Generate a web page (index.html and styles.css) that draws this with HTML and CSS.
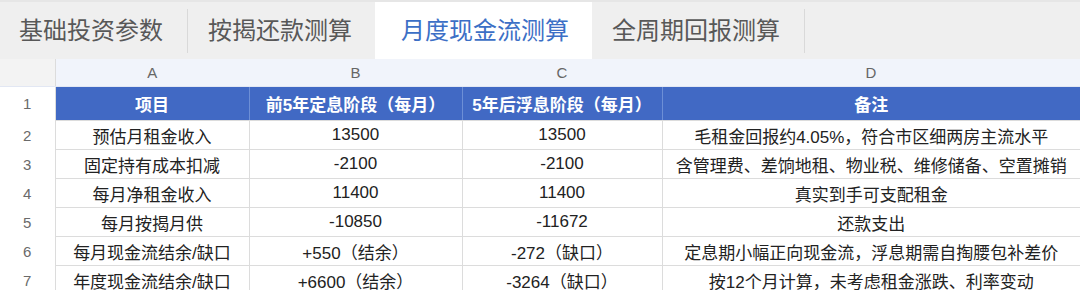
FILE: index.html
```html
<!DOCTYPE html>
<html lang="zh">
<head>
<meta charset="utf-8">
<link rel="stylesheet" href="styles.css">
</head>
<body>
<div class="tabbar">
  <div class="tab t1">基础投资参数</div>
  <div class="sep"></div>
  <div class="tab t2">按揭还款测算</div>
  <div class="tab active">月度现金流测算</div>
  <div class="tab t4">全周期回报测算</div>
  <div class="sep"></div>
</div>
<table class="sheet">
  <colgroup>
    <col class="c0"><col class="ca"><col class="cb"><col class="cc"><col class="cd">
  </colgroup>
  <tr class="letters">
    <td class="corner"></td><td>A</td><td>B</td><td>C</td><td>D</td>
  </tr>
  <tr class="head">
    <td class="rn">1</td><td>项目</td><td>前5年定息阶段（每月）</td><td>5年后浮息阶段（每月）</td><td>备注</td>
  </tr>
  <tr>
    <td class="rn">2</td><td>预估月租金收入</td><td>13500</td><td>13500</td><td>毛租金回报约4.05%，符合市区细两房主流水平</td>
  </tr>
  <tr>
    <td class="rn">3</td><td>固定持有成本扣减</td><td>-2100</td><td>-2100</td><td>含管理费、差饷地租、物业税、维修储备、空置摊销</td>
  </tr>
  <tr>
    <td class="rn">4</td><td>每月净租金收入</td><td>11400</td><td>11400</td><td>真实到手可支配租金</td>
  </tr>
  <tr>
    <td class="rn">5</td><td>每月按揭月供</td><td>-10850</td><td>-11672</td><td>还款支出</td>
  </tr>
  <tr>
    <td class="rn">6</td><td>每月现金流结余/缺口</td><td>+550（结余）</td><td>-272（缺口）</td><td>定息期小幅正向现金流，浮息期需自掏腰包补差价</td>
  </tr>
  <tr>
    <td class="rn">7</td><td>年度现金流结余/缺口</td><td>+6600（结余）</td><td>-3264（缺口）</td><td>按12个月计算，未考虑租金涨跌、利率变动</td>
  </tr>
</table>
</body>
</html>
```
FILE: styles.css
```css
html, body {
  margin: 0;
  padding: 0;
  background: #ffffff;
  font-family: "Liberation Sans", "Noto Sans CJK SC", sans-serif;
  overflow: hidden;
}

.tabbar {
  display: flex;
  align-items: center;
  height: 59px;
  background: #efefef;
  border-top: 2px solid #e6e6e6;
  box-sizing: border-box;
}

.tab {
  font-size: 24px;
  color: #585858;
  padding: 0 22px;
  line-height: 57px;
  white-space: nowrap;
}

.t1 { padding-left: 19px; padding-right: 24px; }
.t2 { padding-left: 20px; padding-right: 23px; }
.t4 { padding-left: 20px; padding-right: 24px; }

.tab.active {
  background: #ffffff;
  color: #3c6fc6;
  padding: 0 23px 0 26px;
  align-self: stretch;
}

.sep {
  width: 1px;
  height: 44px;
  background: #d9d9d9;
}

.sheet {
  table-layout: fixed;
  border-collapse: collapse;
  width: 1080px;
}

.c0 { width: 55px; }
.ca { width: 194px; }
.cb { width: 213px; }
.cc { width: 200px; }
.cd { width: 418px; }

.sheet td {
  padding: 0;
  text-align: center;
  white-space: nowrap;
  overflow: hidden;
  font-size: 17px;
  color: #222222;
  height: 28px;
  border: 1px solid #dcdcdc;
  border-top: none;
}

.sheet td:last-child { border-right: none; }

.letters td {
  height: 27px;
  background: #f1f4fb;
  color: #666666;
  font-size: 15px;
  border-bottom: 1px solid #e2e7f3;
  border-left: none;
  border-right: none;
}

.letters td.corner {
  background: #f3f3f3;
  border-right: 1px solid #dcdcdc;
}

.head td {
  height: 33px;
  background: #4169c4;
  color: #ffffff;
  font-weight: bold;
  font-size: 17px;
  border-top: 1px solid #5a85d8;
  border-left: 1px solid #6d8fd6;
  border-right: 1px solid #6d8fd6;
  border-bottom: 1px solid #dcdcdc;
}

.sheet td.rn {
  background: #ffffff;
  color: #6a6a6a;
  font-size: 15px;
  font-weight: normal;
  border-top: none;
  border-bottom: none;
  border-left: none;
  border-right: 1px solid #dcdcdc;
}
```
